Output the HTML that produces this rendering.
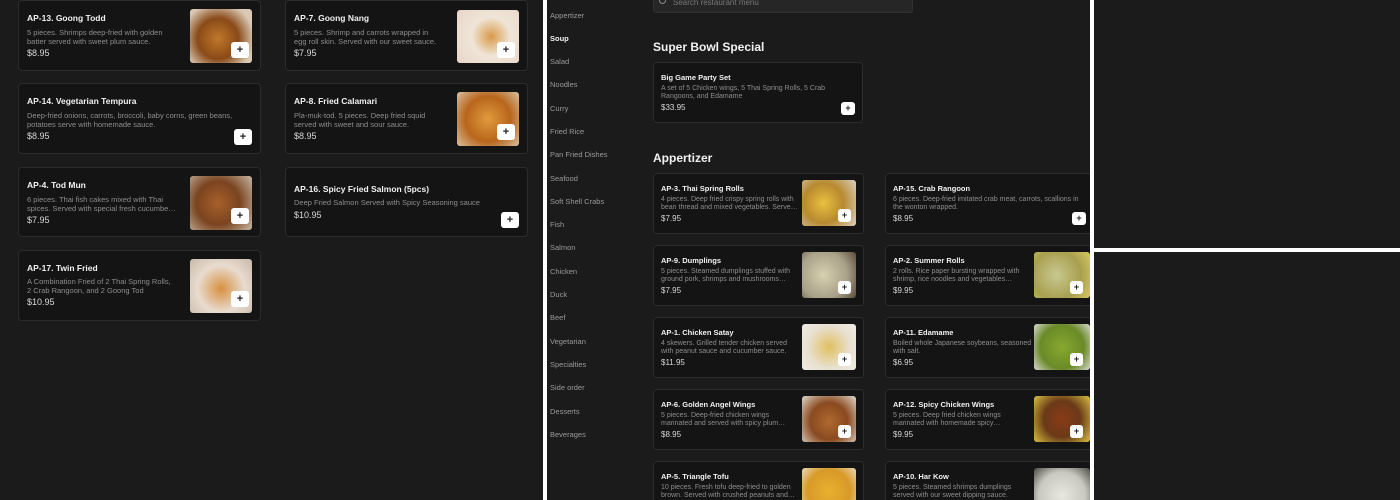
<!DOCTYPE html>
<html><head><meta charset="utf-8"><style>
*{margin:0;padding:0;box-sizing:border-box}
html,body{width:1400px;height:500px;overflow:hidden}
body{background:#1b1b1b;font-family:"Liberation Sans",sans-serif}
#r{position:relative;width:1400px;height:500px;overflow:hidden}
.w{position:absolute;background:#fff;z-index:5}
.c{position:absolute;background:#141414;border:1px solid #2c2c2c;border-radius:4px;overflow:hidden}
.t{position:absolute;color:#f2f2f2;font-weight:bold}
.d{position:absolute;color:#8d8d8d;line-height:1.2}
.p{position:absolute;color:#d8d8d8}
.im{position:absolute;border-radius:3px}
.b{position:absolute;background:#fff;border-radius:3px;color:#222;font-size:11px;text-align:center;font-weight:bold}
.s{position:absolute;left:550px;font-size:7.5px;color:#9a9a9a}
.h{position:absolute;left:653px;font-size:12px;font-weight:bold;color:#f2f2f2}
</style></head><body><div id="r">
<div class="w" style="left:543px;top:0;width:4px;height:500px"></div>
<div class="w" style="left:1090px;top:0;width:4px;height:500px"></div>
<div class="w" style="left:1094px;top:248px;width:306px;height:4px"></div>

<div class="c" style="left:18px;top:0;width:243px;height:71px"></div>
<div class="t" style="left:27px;top:13px;font-size:8.5px">AP-13. Goong Todd</div>
<div class="d" style="left:27px;top:28px;font-size:7.5px">5 pieces. Shrimps deep-fried with golden<br>batter served with sweet plum sauce.</div>
<div class="p" style="left:27px;top:48px;font-size:9px">$8.95</div>
<div class="im" style="left:190px;top:9px;width:62px;height:54px;background:radial-gradient(circle at 45% 55%,#c0782a,#8a4a18 45%,#d9c8b4 80%)"></div>
<div class="b" style="left:231px;top:42px;width:18px;height:16px;line-height:16px">+</div>

<div class="c" style="left:285px;top:0;width:243px;height:71px"></div>
<div class="t" style="left:294px;top:13px;font-size:8.5px">AP-7. Goong Nang</div>
<div class="d" style="left:294px;top:28px;font-size:7.5px">5 pieces. Shrimp and carrots wrapped in<br>egg roll skin. Served with our sweet sauce.</div>
<div class="p" style="left:294px;top:48px;font-size:9px">$7.95</div>
<div class="im" style="left:457px;top:10px;width:62px;height:53px;background:radial-gradient(circle at 55% 50%,#d99a4a,#efe5d8 45%,#e8d6c8)"></div>
<div class="b" style="left:497px;top:42px;width:18px;height:16px;line-height:16px">+</div>

<div class="c" style="left:18px;top:83px;width:243px;height:71px"></div>
<div class="t" style="left:27px;top:96px;font-size:8.5px">AP-14. Vegetarian Tempura</div>
<div class="d" style="left:27px;top:111px;font-size:7.5px">Deep-fried onions, carrots, broccoli, baby corns, green beans,<br>potatoes serve with homemade sauce.</div>
<div class="p" style="left:27px;top:131px;font-size:9px">$8.95</div>
<div class="b" style="left:234px;top:129px;width:18px;height:16px;line-height:16px">+</div>

<div class="c" style="left:285px;top:83px;width:243px;height:71px"></div>
<div class="t" style="left:294px;top:96px;font-size:8.5px">AP-8. Fried Calamari</div>
<div class="d" style="left:294px;top:111px;font-size:7.5px">Pla-muk-tod. 5 pieces. Deep fried squid<br>served with sweet and sour sauce.</div>
<div class="p" style="left:294px;top:131px;font-size:9px">$8.95</div>
<div class="im" style="left:457px;top:92px;width:62px;height:54px;background:radial-gradient(circle at 50% 50%,#e09a3c,#b8661c 55%,#d8c0a0)"></div>
<div class="b" style="left:497px;top:124px;width:18px;height:16px;line-height:16px">+</div>

<div class="c" style="left:18px;top:167px;width:243px;height:70px"></div>
<div class="t" style="left:27px;top:180px;font-size:8.5px">AP-4. Tod Mun</div>
<div class="d" style="left:27px;top:195px;font-size:7.5px">6 pieces. Thai fish cakes mixed with Thai<br>spices. Served with special fresh cucumbe…</div>
<div class="p" style="left:27px;top:215px;font-size:9px">$7.95</div>
<div class="im" style="left:190px;top:176px;width:62px;height:54px;background:radial-gradient(circle at 45% 50%,#a8602a,#7a4420 50%,#c8b8a4)"></div>
<div class="b" style="left:231px;top:208px;width:18px;height:16px;line-height:16px">+</div>

<div class="c" style="left:285px;top:167px;width:243px;height:70px"></div>
<div class="t" style="left:294px;top:184px;font-size:8.5px">AP-16. Spicy Fried Salmon (5pcs)</div>
<div class="d" style="left:294px;top:198px;font-size:7.5px">Deep Fried Salmon Served with Spicy Seasoning sauce</div>
<div class="p" style="left:294px;top:210px;font-size:9px">$10.95</div>
<div class="b" style="left:501px;top:212px;width:18px;height:16px;line-height:16px">+</div>

<div class="c" style="left:18px;top:250px;width:243px;height:71px"></div>
<div class="t" style="left:27px;top:263px;font-size:8.5px">AP-17. Twin Fried</div>
<div class="d" style="left:27px;top:277px;font-size:7.5px">A Combination Fried of 2 Thai Spring Rolls,<br>2 Crab Rangoon, and 2 Goong Tod</div>
<div class="p" style="left:27px;top:297px;font-size:9px">$10.95</div>
<div class="im" style="left:190px;top:259px;width:62px;height:54px;background:radial-gradient(circle at 50% 55%,#d89040,#e8dcd0 55%,#c8b8a8)"></div>
<div class="b" style="left:231px;top:291px;width:18px;height:16px;line-height:16px">+</div>

<div class="s" style="top:11px">Appertizer</div>
<div class="s" style="top:34px;color:#f0f0f0;font-weight:bold">Soup</div>
<div class="s" style="top:57px">Salad</div>
<div class="s" style="top:80px">Noodles</div>
<div class="s" style="top:104px">Curry</div>
<div class="s" style="top:127px">Fried Rice</div>
<div class="s" style="top:150px">Pan Fried Dishes</div>
<div class="s" style="top:174px">Seafood</div>
<div class="s" style="top:197px">Soft Shell Crabs</div>
<div class="s" style="top:220px">Fish</div>
<div class="s" style="top:243px">Salmon</div>
<div class="s" style="top:267px">Chicken</div>
<div class="s" style="top:290px">Duck</div>
<div class="s" style="top:313px">Beef</div>
<div class="s" style="top:337px">Vegetarian</div>
<div class="s" style="top:360px">Specialties</div>
<div class="s" style="top:383px">Side order</div>
<div class="s" style="top:407px">Desserts</div>
<div class="s" style="top:430px">Beverages</div>

<div style="position:absolute;left:653px;top:-6px;width:260px;height:19px;background:#262626;border:1px solid #303030;border-radius:3px"></div>
<div style="position:absolute;left:659px;top:-3px;width:7px;height:7px;border:1.3px solid #888;border-radius:50%"></div>
<div style="position:absolute;left:673px;top:-2px;font-size:8px;color:#777">Search restaurant menu</div>

<div class="h" style="top:40px">Super Bowl Special</div>
<div class="c" style="left:653px;top:62px;width:210px;height:61px"></div>
<div class="t" style="left:661px;top:73px;font-size:7.5px">Big Game Party Set</div>
<div class="d" style="left:661px;top:85px;font-size:7px">A set of 5 Chicken wings, 5 Thai Spring Rolls, 5 Crab<br>Rangoons, and Edamame</div>
<div class="p" style="left:661px;top:103px;font-size:8px">$33.95</div>
<div class="b" style="left:841px;top:102px;width:14px;height:13px;line-height:13px;font-size:9px">+</div>

<div class="h" style="top:151px">Appertizer</div>

<div class="c" style="left:653px;top:173px;width:211px;height:61px"></div>
<div class="t" style="left:661px;top:184px;font-size:7.5px">AP-3. Thai Spring Rolls</div>
<div class="d" style="left:661px;top:196px;font-size:7px">4 pieces. Deep fried crispy spring rolls with<br>bean thread and mixed vegetables. Serve…</div>
<div class="p" style="left:661px;top:214px;font-size:8px">$7.95</div>
<div class="im" style="left:802px;top:180px;width:54px;height:46px;background:radial-gradient(circle at 40% 50%,#e8c040,#b88a30 50%,#d8d0c0)"></div>
<div class="b" style="left:838px;top:209px;width:13px;height:13px;line-height:13px;font-size:9px">+</div>

<div class="c" style="left:885px;top:173px;width:210px;height:61px"></div>
<div class="t" style="left:893px;top:184px;font-size:7.5px">AP-15. Crab Rangoon</div>
<div class="d" style="left:893px;top:196px;font-size:7px">6 pieces. Deep-fried imitated crab meat, carrots, scallions in<br>the wonton wrapped.</div>
<div class="p" style="left:893px;top:214px;font-size:8px">$8.95</div>
<div class="b" style="left:1072px;top:212px;width:14px;height:13px;line-height:13px;font-size:9px">+</div>

<div class="c" style="left:653px;top:245px;width:211px;height:61px"></div>
<div class="t" style="left:661px;top:256px;font-size:7.5px">AP-9. Dumplings</div>
<div class="d" style="left:661px;top:268px;font-size:7px">5 pieces. Steamed dumplings stuffed with<br>ground pork, shrimps and mushrooms…</div>
<div class="p" style="left:661px;top:286px;font-size:8px">$7.95</div>
<div class="im" style="left:802px;top:252px;width:54px;height:46px;background:radial-gradient(circle at 40% 50%,#d8d0b0,#a8a088 60%,#5a4a3a)"></div>
<div class="b" style="left:838px;top:281px;width:13px;height:13px;line-height:13px;font-size:9px">+</div>

<div class="c" style="left:885px;top:245px;width:210px;height:61px"></div>
<div class="t" style="left:893px;top:256px;font-size:7.5px">AP-2. Summer Rolls</div>
<div class="d" style="left:893px;top:268px;font-size:7px">2 rolls. Rice paper bursting wrapped with<br>shrimp, rice noodles and vegetables…</div>
<div class="p" style="left:893px;top:286px;font-size:8px">$9.95</div>
<div class="im" style="left:1034px;top:252px;width:56px;height:46px;background:radial-gradient(circle at 40% 50%,#c8c890,#a8a050 60%,#d8c860)"></div>
<div class="b" style="left:1070px;top:281px;width:13px;height:13px;line-height:13px;font-size:9px">+</div>

<div class="c" style="left:653px;top:317px;width:211px;height:61px"></div>
<div class="t" style="left:661px;top:328px;font-size:7.5px">AP-1. Chicken Satay</div>
<div class="d" style="left:661px;top:340px;font-size:7px">4 skewers. Grilled tender chicken served<br>with peanut sauce and cucumber sauce.</div>
<div class="p" style="left:661px;top:358px;font-size:8px">$11.95</div>
<div class="im" style="left:802px;top:324px;width:54px;height:46px;background:radial-gradient(circle at 50% 50%,#e0c060,#e8e0d0 60%,#f0ece4)"></div>
<div class="b" style="left:838px;top:353px;width:13px;height:13px;line-height:13px;font-size:9px">+</div>

<div class="c" style="left:885px;top:317px;width:210px;height:61px"></div>
<div class="t" style="left:893px;top:328px;font-size:7.5px">AP-11. Edamame</div>
<div class="d" style="left:893px;top:340px;font-size:7px">Boiled whole Japanese soybeans, seasoned<br>with salt.</div>
<div class="p" style="left:893px;top:358px;font-size:8px">$6.95</div>
<div class="im" style="left:1034px;top:324px;width:56px;height:46px;background:radial-gradient(circle at 50% 50%,#88a830,#6a8a28 60%,#d8d8d0)"></div>
<div class="b" style="left:1070px;top:353px;width:13px;height:13px;line-height:13px;font-size:9px">+</div>

<div class="c" style="left:653px;top:389px;width:211px;height:61px"></div>
<div class="t" style="left:661px;top:400px;font-size:7.5px">AP-6. Golden Angel Wings</div>
<div class="d" style="left:661px;top:412px;font-size:7px">5 pieces. Deep-fried chicken wings<br>marinated and served with spicy plum…</div>
<div class="p" style="left:661px;top:430px;font-size:8px">$8.95</div>
<div class="im" style="left:802px;top:396px;width:54px;height:46px;background:radial-gradient(circle at 50% 55%,#b06a30,#8a4a20 50%,#e0d8cc)"></div>
<div class="b" style="left:838px;top:425px;width:13px;height:13px;line-height:13px;font-size:9px">+</div>

<div class="c" style="left:885px;top:389px;width:210px;height:61px"></div>
<div class="t" style="left:893px;top:400px;font-size:7.5px">AP-12. Spicy Chicken Wings</div>
<div class="d" style="left:893px;top:412px;font-size:7px">5 pieces. Deep fried chicken wings<br>marinated with homemade spicy…</div>
<div class="p" style="left:893px;top:430px;font-size:8px">$9.95</div>
<div class="im" style="left:1034px;top:396px;width:56px;height:46px;background:radial-gradient(circle at 50% 50%,#8a3a18,#6a3a18 50%,#d8c040)"></div>
<div class="b" style="left:1070px;top:425px;width:13px;height:13px;line-height:13px;font-size:9px">+</div>

<div class="c" style="left:653px;top:461px;width:211px;height:61px"></div>
<div class="t" style="left:661px;top:472px;font-size:7.5px">AP-5. Triangle Tofu</div>
<div class="d" style="left:661px;top:484px;font-size:7px">10 pieces. Fresh tofu deep-fried to golden<br>brown. Served with crushed peanuts and…</div>
<div class="im" style="left:802px;top:468px;width:54px;height:46px;background:radial-gradient(circle at 50% 50%,#e8b030,#d89a28 60%,#e8d8b8)"></div>

<div class="c" style="left:885px;top:461px;width:210px;height:61px"></div>
<div class="t" style="left:893px;top:472px;font-size:7.5px">AP-10. Har Kow</div>
<div class="d" style="left:893px;top:484px;font-size:7px">5 pieces. Steamed shrimps dumplings<br>served with our sweet dipping sauce.</div>
<div class="im" style="left:1034px;top:468px;width:56px;height:46px;background:radial-gradient(circle at 50% 60%,#e8e8e0,#c8c8c0 60%,#4a4a44)"></div>
<div style="position:absolute;left:1094px;top:0;width:306px;height:248px;background:#1b1b1b;z-index:4"></div>
<div style="position:absolute;left:1094px;top:252px;width:306px;height:248px;background:#1b1b1b;z-index:4"></div>
</div></body></html>
